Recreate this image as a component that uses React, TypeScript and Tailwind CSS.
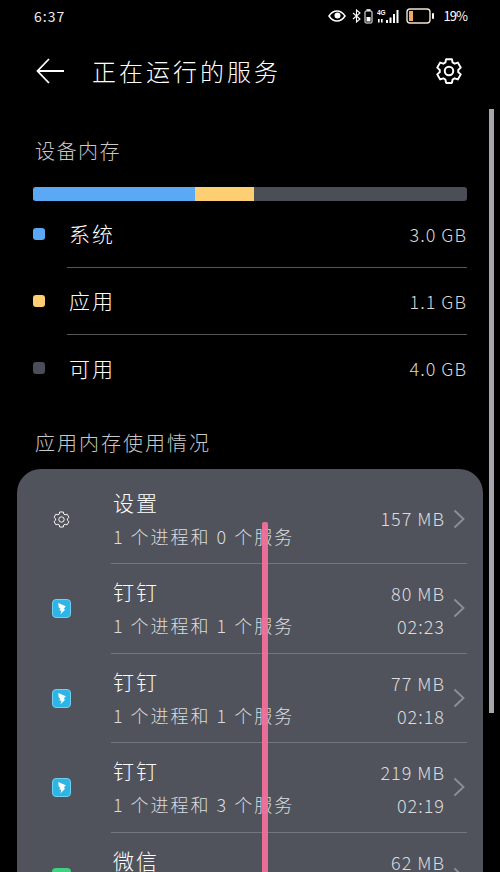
const font = "font-['Noto_Sans_CJK_SC','Noto_Sans',sans-serif]";

function Eye() {
  return (
    <svg width="18" height="12" viewBox="0 0 18 12" fill="none">
      <path d="M1 6c2-3 5-5 8-5s6 2 8 5c-2 3-5 5-8 5S3 9 1 6Z" stroke="white" strokeWidth="1.5" />
      <circle cx="9.5" cy="5.5" r="3" fill="white" />
    </svg>
  );
}

function Bluetooth() {
  return (
    <svg width="9" height="14" viewBox="0 0 9 14" fill="none">
      <path d="M1 4l7 6-3.5 3V1L8 4l-7 6" stroke="white" strokeWidth="1.1" />
    </svg>
  );
}

function SimBattery() {
  return (
    <svg width="9" height="15" viewBox="0 0 9 15" fill="none">
      <rect x="2.5" y="0" width="4" height="2" fill="#ccc" />
      <rect x="1" y="2" width="7" height="12" rx="1" stroke="white" strokeWidth="1" />
      <rect x="2.5" y="8" width="4" height="4.5" fill="white" />
    </svg>
  );
}

function Signal() {
  return (
    <svg width="24" height="15" viewBox="0 0 24 15" fill="white">
      <text x="0" y="6" fontSize="6.5" fontWeight="700" fontFamily="Liberation Sans, sans-serif">4G</text>
      <rect x="1" y="10" width="1.6" height="3.5" />
      <rect x="4" y="10" width="1.6" height="3.5" />
      <rect x="9" y="11" width="2" height="3" />
      <rect x="12.5" y="8.5" width="2" height="5.5" />
      <rect x="16" y="5" width="2" height="9" />
      <rect x="19.5" y="1" width="2" height="13" />
    </svg>
  );
}

function Battery() {
  return (
    <svg width="28" height="16" viewBox="0 0 28 16" fill="none">
      <rect x="1" y="1" width="23" height="14" rx="3" stroke="#f4e2d2" strokeWidth="1.4" />
      <rect x="3" y="3" width="4" height="10" fill="#f0a868" />
      <rect x="26" y="5" width="2" height="6" rx="1" fill="white" />
    </svg>
  );
}

function Gear({ size, stroke }: { size: number; stroke: number }) {
  return (
    <svg width={size} height={size} viewBox="0 0 24 24" fill="none" stroke="white" strokeWidth={stroke} strokeLinejoin="round">
      <path d="M9.7 2.5h4.6l.6 2.7 1.6.9 2.6-.8 2.3 4-2 1.8v1.8l2 1.8-2.3 4-2.6-.8-1.6.9-.6 2.7H9.7l-.6-2.7-1.6-.9-2.6.8-2.3-4 2-1.8v-1.8l-2-1.8 2.3-4 2.6.8 1.6-.9z" />
      <circle cx="12" cy="12" r="3.4" />
    </svg>
  );
}

function DingTalk() {
  return (
    <div className="w-[19px] h-[19px] rounded-[4px] bg-[#2fb4e6] border border-[#6fd0f0] flex items-center justify-center">
      <svg width="12" height="13" viewBox="0 0 11 12" fill="white">
        <path d="M2 1l7 3-2 2.5 1.5.5L4 11.5 5 8 3 7.5 4 6 2.5 5z" />
      </svg>
    </div>
  );
}

function Chevron() {
  return (
    <svg width="12" height="20" viewBox="0 0 12 20" fill="none" stroke="#8d9097" strokeWidth="1.8" className="mr-[2px]">
      <path d="M1.5 1.5 10.5 10l-9 8.5" />
    </svg>
  );
}

const memory = [
  { dot: "bg-[#5ba8f5]", name: "系统", size: "3.0 GB" },
  { dot: "bg-[#fdcf72]", name: "应用", size: "1.1 GB" },
  { dot: "bg-[#4b4d57]", name: "可用", size: "4.0 GB" },
];

const apps = [
  { icon: "gear", name: "设置", sub: "1 个进程和 0 个服务", size: "157 MB", time: "" },
  { icon: "ding", name: "钉钉", sub: "1 个进程和 1 个服务", size: "80 MB", time: "02:23" },
  { icon: "ding", name: "钉钉", sub: "1 个进程和 1 个服务", size: "77 MB", time: "02:18" },
  { icon: "ding", name: "钉钉", sub: "1 个进程和 3 个服务", size: "219 MB", time: "02:19" },
  { icon: "wechat", name: "微信", sub: "1 个进程和 2 个服务", size: "62 MB", time: "02:19" },
];

export default function App() {
  return (
    <div className={`relative w-[500px] h-[872px] overflow-hidden bg-black text-white ${font}`}>
      <div className="flex items-center justify-between h-[32px] pl-[34px] pr-[33px]">
        <span className="text-[14px] tracking-[1px] text-[#eee]">6:37</span>
        <div className="flex items-center gap-[3px]">
          <Eye />
          <div className="ml-[3px]">
            <Bluetooth />
          </div>
          <SimBattery />
          <div className="ml-[1px]">
            <Signal />
          </div>
          <div className="ml-[2px]">
            <Battery />
          </div>
          <span className="ml-[7px] text-[13px] tracking-[-1px]">19%</span>
        </div>
      </div>

      <div className="flex items-center justify-between h-[78px] pl-[36px] pr-[36px]">
        <div className="flex items-center gap-[28px]">
          <svg width="28" height="26" viewBox="0 0 28 26" fill="none" stroke="white" strokeWidth="1.8">
            <path d="M13 1 1.5 13 13 25M2 13h26" />
          </svg>
          <span className="text-[24px] tracking-[3px] font-light leading-none">正在运行的服务</span>
        </div>
        <Gear size={30} stroke={1.6} />
      </div>

      <div className="mt-[27px] pl-[35px] text-[20px] tracking-[1.5px] leading-[28px] font-light text-[#c9c9c9]">设备内存</div>

      <div className="flex mt-[22px] mx-[33px] w-[434px] h-[14px] rounded-[3px] overflow-hidden bg-[#4b4d57]">
        <div className="w-[162px] bg-[#5ba8f5]" />
        <div className="w-[59px] bg-[#fdcf72]" />
      </div>

      <div className="ml-[33px] w-[434px]">
        {memory.map((m, i) => (
          <div key={m.name} className="flex items-center h-[67px]">
            <div className={`w-[12px] h-[12px] rounded-[3px] mr-[22px] -mt-[2px] ${m.dot}`} />
            <div className={`flex flex-1 h-full items-center justify-between ${i < 2 ? "border-b border-[#55555a]" : ""}`}>
              <span className="pl-[2px] text-[21px] tracking-[2px] font-light">{m.name}</span>
              <span className="text-[18px] tracking-[1px] font-light text-[#d8d8d8]">{m.size}</span>
            </div>
          </div>
        ))}
      </div>

      <div className="mt-[27px] pl-[35px] text-[20px] tracking-[2px] leading-[28px] font-light text-[#c9c9c9]">应用内存使用情况</div>

      <div className="mt-[12px] mx-[17px] w-[466px] rounded-t-[24px] bg-[#50535c] pt-[5.5px]">
        {apps.map((a, i) => (
          <div key={i} className="flex h-[89.5px]">
            <div className="w-[94px] shrink-0 pl-[35px] pt-[35px]">
              {a.icon === "gear" && <Gear size={19} stroke={1.2} />}
              {a.icon === "ding" && <DingTalk />}
              {a.icon === "wechat" && <div className="w-[19px] h-[19px] rounded-[4px] bg-[#3fd17f]" />}
            </div>
            <div className="flex flex-1 mr-[16px] justify-between border-b border-[#73767e]">
              <div className="pl-[2px] pt-[12px]">
                <div className="text-[21px] leading-[30px] tracking-[2px] font-light">{a.name}</div>
                <div className="mt-[6px] text-[18px] leading-[26px] tracking-[2px] font-light text-[#dcdcdc]">{a.sub}</div>
              </div>
              <div className="flex items-center gap-[8px]">
                <div className={`text-right text-[18px] leading-[33px] font-light text-[#dcdcdc] tracking-[1px] ${a.time ? "mt-[4px]" : ""}`}>
                  <div>{a.size}</div>
                  {a.time && <div>{a.time}</div>}
                </div>
                <Chevron />
              </div>
            </div>
          </div>
        ))}
      </div>

      {/* scrollbar and the pink mark lie over the page */}
      <div className="absolute left-[489px] top-[109px] w-[5px] h-[604px] bg-[#a5a5ab]" />
      <div className="absolute left-[262px] top-[522px] w-[6px] h-[350px] bg-[#f0709a]/95 rounded-t-[2px]" />
    </div>
  );
}
